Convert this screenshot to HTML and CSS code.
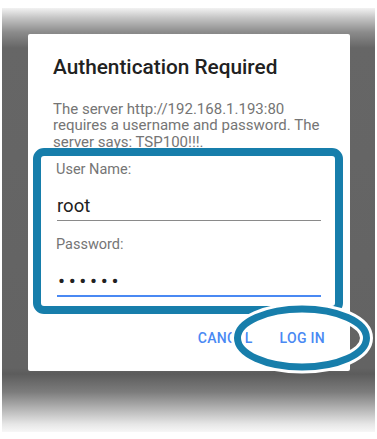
FILE: index.html
```html
<!DOCTYPE html>
<html lang="en">
<head>
    <meta charset="UTF-8">
    <meta name="viewport" content="width=device-width, initial-scale=1.0">
    <title>Authentication Required</title>
    <link rel="stylesheet" href="styles.css">
</head>
<body>

    <!-- Dimmed page behind the dialog -->
    <div class="backdrop">
        <div class="dialog">
            <h1 class="dialog-title">Authentication Required</h1>
            <p class="dialog-message">The server http://192.168.1.193:80 requires a username and password. The server says: TSP100!!!.</p>

            <!-- Highlighted login fields -->
            <div class="fields">
                <label class="field-label">User Name:</label>
                <div class="field-value">root</div>
                <label class="field-label">Password:</label>
                <div class="field-value password">••••••</div>
            </div>

            <div class="actions">
                <button class="action-button">Cancel</button>
                <button class="action-button">Log in</button>
            </div>

            <!-- Callout ring round the log in button -->
            <svg class="callout" width="142" height="72" viewBox="0 0 142 72">
                <ellipse cx="71" cy="36" rx="64.5" ry="29" fill="none" stroke="#fff" stroke-width="13"/>
                <ellipse cx="71" cy="36" rx="64.5" ry="29" fill="none" stroke="#177eab" stroke-width="7"/>
            </svg>
        </div>
    </div>

</body>
</html>
```

FILE: styles.css
```css
/* Page and dimmed backdrop */
body {
    margin: 0;
    width: 377px;
    height: 439px;
    background-color: #fff;
    font-family: Roboto, "Noto Sans", Arial, sans-serif;
    overflow: hidden;
}

.backdrop {
    margin: 8px 0 0 2px;
    width: 373px;
    height: 424px;
    padding-top: 26px;
    box-sizing: border-box;
    background: linear-gradient(to bottom,
        #f2f2f2 0,
        #c4c4c4 10px,
        #8c8c8c 24px,
        #666 40px,
        #636363 360px,
        #5c5c5c 366px,
        #7c7c7c 384px,
        #b8b8b8 402px,
        #e6e6e6 416px,
        #f7f7f7 424px);
}

/* Dialog card */
.dialog {
    position: relative;
    margin-left: 26px;
    width: 322px;
    height: 337px;
    background-color: #fff;
    border-radius: 2px;
    padding-top: 21px;
    box-sizing: border-box;
}

.dialog-title {
    margin: 0 0 0 25px;
    font-size: 20.8px;
    line-height: 25px;
    font-weight: 500;
    color: #212121;
}

.dialog-message {
    margin: 21px 26px 0 25px;
    font-size: 15px;
    line-height: 16.3px;
    color: #757575;
}

/* Annotation frame round the inputs */
.fields {
    position: relative;
    margin: -2px 0 0 5px;
    width: 310px;
    border: 8px solid #177eab;
    border-radius: 11px;
    background-color: #fff;
    padding: 6px 14px 9px 16px;
    box-sizing: border-box;
    display: flex;
    flex-direction: column;
}

.field-label {
    margin-left: -1px;
    font-size: 14.5px;
    line-height: 16px;
    color: #757575;
}

.field-value {
    margin-top: 16px;
    margin-bottom: 16px;
    padding-bottom: 2px;
    font-size: 18.5px;
    line-height: 24px;
    color: #212121;
    border-bottom: 1px solid #8a8a8a;
}

.field-value:last-child {
    margin-bottom: 0;
}

.password {
    padding-left: 1px;
    font-size: 21px;
    letter-spacing: 3.6px;
    border-bottom: 2px solid #4a89f3;
}

/* Dialog buttons */
.actions {
    display: flex;
    justify-content: flex-end;
    gap: 27px;
    margin-top: 16px;
    padding-right: 25px;
}

.action-button {
    background: none;
    border: none;
    padding: 0;
    font-family: inherit;
    font-size: 14px;
    line-height: 16px;
    font-weight: 500;
    letter-spacing: 0.3px;
    text-transform: uppercase;
    color: #4a89f3;
    cursor: pointer;
}

.callout {
    position: absolute;
    left: 203px;
    top: 268px;
}
```
